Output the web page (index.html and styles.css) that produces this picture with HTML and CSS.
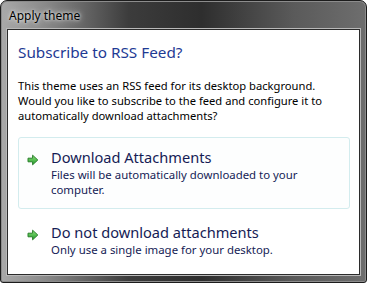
FILE: index.html
```html
<!DOCTYPE html>
<html lang="en">
<head>
    <meta charset="UTF-8">
    <title>Apply theme</title>
    <link rel="stylesheet" href="styles.css">
</head>
<body>
    <div class="window">
        <div class="titlebar">Apply theme</div>
        <div class="client">
            <h1 class="instruction">Subscribe to RSS Feed?</h1>
            <p class="content">This theme uses an RSS feed for its desktop background. Would you like to subscribe to the feed and configure it to automatically download attachments?</p>
            <div class="command hover">
                <svg class="arrow" width="12" height="12" viewBox="0 0 12 12">
                    <defs>
                        <linearGradient id="g1" x1="0" y1="0" x2="0" y2="1">
                            <stop offset="0" stop-color="#8fe37a"/>
                            <stop offset="1" stop-color="#1f9a2a"/>
                        </linearGradient>
                    </defs>
                    <path d="M1 4.2 H5.6 V1.2 L10.8 6 L5.6 10.8 V7.8 H1 Z" fill="url(#g1)" stroke="#2a7f2c" stroke-width="1" stroke-linejoin="round"/>
                </svg>
                <div class="command-text">
                    <div class="command-title">Download Attachments</div>
                    <div class="command-note">Files will be automatically downloaded to your computer.</div>
                </div>
            </div>
            <div class="command">
                <svg class="arrow" width="12" height="12" viewBox="0 0 12 12">
                    <defs>
                        <linearGradient id="g2" x1="0" y1="0" x2="0" y2="1">
                            <stop offset="0" stop-color="#8fe37a"/>
                            <stop offset="1" stop-color="#1f9a2a"/>
                        </linearGradient>
                    </defs>
                    <path d="M1 4.2 H5.6 V1.2 L10.8 6 L5.6 10.8 V7.8 H1 Z" fill="url(#g2)" stroke="#2a7f2c" stroke-width="1" stroke-linejoin="round"/>
                </svg>
                <div class="command-text">
                    <div class="command-title">Do not download attachments</div>
                    <div class="command-note">Only use a single image for your desktop.</div>
                </div>
            </div>
        </div>
    </div>
</body>
</html>
```

FILE: styles.css
```css
body {
    margin: 0;
    background-color: #ffffff;
    font-family: "Noto Sans", "Open Sans", sans-serif;
}
.window {
    width: 367px;
    height: 283px;
    box-sizing: border-box;
    display: flex;
    flex-direction: column;
    padding: 0 6px 7px 6px;
    border: 1px solid #1c1c1c;
    border-radius: 7px 7px 3px 3px;
    background: linear-gradient(90deg, #a9a9a9 0%, #8a8a8a 12%, #3c3c3c 35%, #2e2e2e 55%, #5a5a5a 80%, #6e6e6e 100%);
    box-shadow: inset 0 0 0 1px #8c8c8c;
}
.titlebar {
    height: 28px;
    line-height: 30px;
    font-size: 12px;
    color: #000000;
    padding-left: 2px;
    text-shadow: 0 0 6px #e8e8e8, 0 0 3px #e8e8e8;
}
.client {
    flex: 1;
    background-color: #ffffff;
    border: 1px solid #2b2b2b;
    box-shadow: 0 0 0 1px #b9b9b9;
    padding: 11px 9px 0 10px;
}
.instruction {
    margin: 0;
    font-size: 15.3px;
    font-weight: normal;
    color: #1e3a94;
    line-height: 22px;
}
.content {
    margin: 15px 0 0 0;
    font-size: 11.2px;
    line-height: 15px;
    color: #000000;
}
.command {
    display: flex;
    align-items: flex-start;
    margin-top: 14px;
    padding: 10px 8px 11px 8px;
    border: 1px solid transparent;
    border-radius: 3px;
}
.command.hover {
    border-color: #d3ecee;
    background-color: #fdfefe;
}
.command + .command {
    margin-top: 0;
    padding-top: 13px;
}
.arrow {
    margin: 6px 12px 0 0;
    flex: none;
}
.command-title {
    font-size: 14.6px;
    line-height: 19px;
    color: #151c55;
}
.command-note {
    font-size: 11.4px;
    line-height: 15px;
    color: #151c55;
    width: 250px;
}
```
